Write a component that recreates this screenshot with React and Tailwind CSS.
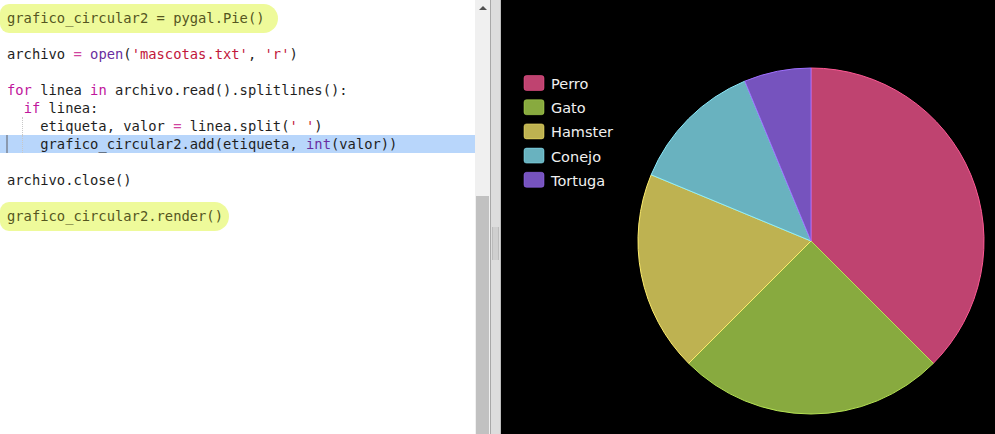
const K = 'text-[#c0169c]';
const OP = 'text-[#d0459f]';
const B = 'text-[#6a2ea0]';
const S = 'text-[#c2173b]';

const slices = [
  { name: 'Perro', value: 6, fill: '#bf4370', stroke: '#ff5995' },
  { name: 'Gato', value: 4, fill: '#88aa3f', stroke: '#b6e354' },
  { name: 'Hamster', value: 3, fill: '#beb251', stroke: '#feed6c' },
  { name: 'Conejo', value: 2, fill: '#69b2bf', stroke: '#8cedff' },
  { name: 'Tortuga', value: 1, fill: '#7653be', stroke: '#9e6ffe' },
];

function Line({ children, className = '' }) {
  return <div className={`relative h-[18px] pl-[7px] whitespace-pre ${className}`}>{children}</div>;
}

function Marker({ children, width }) {
  return (
    <Line>
      <span className="absolute left-0 top-[-5px] h-[29px] rounded-r-[16px] rounded-l-[10px] bg-[#eefa9a]" style={{ width }} />
      <span className="relative text-[#55561f]">{children}</span>
    </Line>
  );
}

function Guide() {
  return <span className="absolute left-[22px] top-0 h-full border-l border-dotted border-[#c8c8c8]" />;
}

function Editor() {
  return (
    <div className="w-[475px] h-full bg-white pt-[9px] text-[13.8px] leading-[18px] text-[#1e1e1e]" style={{ fontFamily: '"DejaVu Sans Mono", monospace' }}>
      <Marker width={278}>grafico_circular2 = pygal.Pie()</Marker>
      <Line />
      <Line>archivo <span className={OP}>=</span> <span className={B}>open</span>(<span className={S}>'mascotas.txt'</span>, <span className={S}>'r'</span>)</Line>
      <Line />
      <Line><span className={K}>for</span> linea <span className={K}>in</span> archivo.read().splitlines():</Line>
      <Line>  <span className={K}>if</span> linea:</Line>
      <Line><Guide />    etiqueta, valor <span className={OP}>=</span> linea.split(<span className={S}>' '</span>)</Line>
      <Line className="bg-[#b8d6fb]">
        <span className="absolute left-[6px] top-0 h-full w-[2px] bg-[#8a99ae]" />
        <Guide />
        {'    '}grafico_circular2.add(etiqueta, <span className={B}>int</span>(valor))
      </Line>
      <Line />
      <Line>archivo.close()</Line>
      <Line />
      <Marker width={229}>grafico_circular2.render()</Marker>
    </div>
  );
}

function Scrollbar() {
  return (
    <div className="w-[16px] h-full flex flex-col bg-[#f0f0f0] border-r border-[#a8a8a8]">
      <div className="h-[196px] flex justify-center pt-[6px]">
        <div className="w-0 h-0 border-l-[4px] border-r-[4px] border-b-[4px] border-l-transparent border-r-transparent border-b-[#505050]" />
      </div>
      <div className="flex-1 bg-[#c1c1c1] mx-[1px]" />
    </div>
  );
}

function Splitter() {
  return (
    <div className="w-[10px] h-full bg-[#dddddd] border-r border-[#bdbdbd] flex justify-center pt-[227px]">
      <div className="w-[7px] h-[33px] bg-[#cfcfcf] border-x border-[#bcbcbc]" />
    </div>
  );
}

function Pie() {
  const cx = 310, cy = 241, r = 173;
  const total = slices.reduce((s, d) => s + d.value, 0);
  let acc = 0;
  const pt = a => [cx + r * Math.sin(a), cy - r * Math.cos(a)];
  return (
    <svg width="493" height="434" className="block">
      {slices.map(d => {
        const a0 = (acc / total) * Math.PI * 2;
        acc += d.value;
        const a1 = (acc / total) * Math.PI * 2;
        const [x0, y0] = pt(a0);
        const [x1, y1] = pt(a1);
        const large = a1 - a0 > Math.PI ? 1 : 0;
        return (
          <path key={d.name} d={`M${cx} ${cy} L${x0} ${y0} A${r} ${r} 0 ${large} 1 ${x1} ${y1} Z`}
            fill={d.fill} stroke={d.stroke} strokeWidth="1" />
        );
      })}
      {slices.map((d, i) => (
        <g key={d.name}>
          <rect x="23" y={75.5 + i * 24.2} width="20" height="15" rx="2.5" fill={d.fill} stroke={d.stroke} strokeWidth="0.5" />
          <text x="50" y={89 + i * 24.2} fill="#f0f0f0" fontSize="14.5" fontFamily='"DejaVu Sans", sans-serif'>{d.name}</text>
        </g>
      ))}
    </svg>
  );
}

export default function App() {
  return (
    <div className="flex w-[995px] h-[434px] overflow-hidden">
      <Editor />
      <Scrollbar />
      <Splitter />
      <div className="flex-1 h-full bg-black">
        <Pie />
      </div>
    </div>
  );
}
